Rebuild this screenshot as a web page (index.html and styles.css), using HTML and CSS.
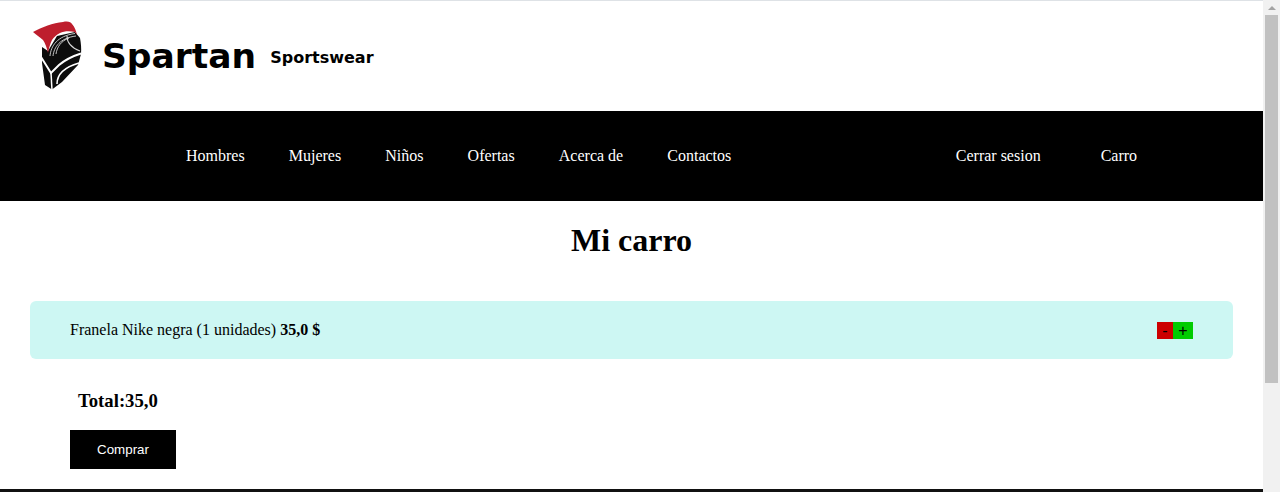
FILE: index.html
```html
<!DOCTYPE html>
<html lang="es">
<head>
    <meta charset="UTF-8">
    <meta name="viewport" content="width=device-width, initial-scale=1.0">
    <title>Mi carro</title>
    <link rel="stylesheet" href="styles.css">
</head>
<body>
    <div class="page">
        <!-- Logo and brand name -->
        <header class="brand">
            <svg class="logo" width="50" height="70" viewBox="0 0 50 70">
                <path fill="#0c0c0c" d="M15 30 L24 15 L42 11 L47 17 C48 22 48.500 28 48 33 L45 44 L29 61 L19 68.500 L12 64 L9 42 L9 26 Z"/>
                <path fill="#be1e2d" d="M0 11 C9 6 20 2 30 1 C35 0 38 1 39 3 C42 6 43 10 44 14 L42 11 C37 10 31 10 27 12 C23 14 21 16 19 19 C17 23 16 27 15 32 C14 27 12 22 10 19 C7 16 3 14 0 11 Z"/>
                <path fill="none" stroke="#d8d8d8" stroke-width="0.9" d="M17 35 C18 25 24 15 42 12.500 M20 35 C21 26 27 17 43 15 M23 33 C24 26 28 20 36 17"/>
                <path fill="none" stroke="#d8d8d8" stroke-width="1.100" d="M34 15 C34 22 39 27 47 30"/>
                <path fill="none" stroke="#fff" stroke-width="2" d="M8 36 L18 52 L26 44 C32 39 40 35 48 32.500"/>
                <path fill="none" stroke="#fff" stroke-width="1.500" d="M18 52 L19 69"/>
                <path fill="none" stroke="#fff" stroke-width="1.600" d="M24 63 C24 53 32 46 46 42"/>
            </svg>
            <span class="brand-name">Spartan</span>
            <span class="brand-tag">Sportswear</span>
        </header>

        <!-- Main navigation -->
        <nav class="navbar">
            <div class="nav-left">
                <a href="#">Hombres</a>
                <a href="#">Mujeres</a>
                <a href="#">Niños</a>
                <a href="#">Ofertas</a>
                <a href="#">Acerca de</a>
                <a href="#">Contactos</a>
            </div>
            <div class="nav-right">
                <a href="#">Cerrar sesion</a>
                <a href="#">Carro</a>
            </div>
        </nav>

        <main class="cart">
            <h1>Mi carro</h1>

            <div class="cart-item">
                <span>Franela Nike negra (1 unidades) <b>35,0 $</b></span>
                <div class="qty-buttons">
                    <button class="btn-minus">-</button>
                    <button class="btn-plus">+</button>
                </div>
            </div>

            <h3 class="total">Total:35,0</h3>
            <button class="buy">Comprar</button>
        </main>

        <footer class="footer"></footer>
    </div>

    <!-- Browser scrollbar -->
    <div class="scrollbar">
        <span class="arrow"></span>
        <span class="thumb"></span>
    </div>
</body>
</html>
```

FILE: styles.css
```css
html, body {
    height: 100%;
}

body {
    margin: 0;
    display: flex;
    height: 492px;
    overflow: hidden;
    background-color: #ffffff;
    color: #000;
    font-family: "Liberation Serif", serif;
    font-size: 16px;
}

.page {
    flex: 1;
    min-width: 0;
    display: flex;
    flex-direction: column;
    border-top: 1px solid #dee2e6;
}

.brand {
    height: 110px;
    padding-left: 33px;
    display: flex;
    align-items: center;
    font-family: "DejaVu Sans", sans-serif;
    font-weight: bold;
}

.logo {
    flex: none;
}

.brand-name {
    margin-left: 19px;
    font-size: 34.5px;
}

.brand-tag {
    margin-left: 14px;
    font-size: 16px;
    margin-top: 2px;
}

.navbar {
    height: 90px;
    flex: none;
    background-color: #000;
    display: flex;
    align-items: center;
    padding-left: 186px;
}

.navbar a {
    color: #fff;
    text-decoration: none;
}

.nav-left {
    display: flex;
    gap: 44.1px;
}

.nav-right {
    display: flex;
    gap: 60px;
    margin-left: 224.5px;
}

.cart {
    flex: 1;
    padding: 0 30px;
}

h1 {
    margin: 21px 0 42px;
    font-size: 32px;
    line-height: 37px;
    text-align: center;
}

.cart-item {
    height: 58px;
    padding: 0 40px;
    display: flex;
    align-items: center;
    justify-content: space-between;
    background-color: #cdf7f3;
    border-radius: 6px;
}

.qty-buttons {
    display: flex;
}

.qty-buttons button {
    height: 17px;
    padding: 0;
    border: none;
    font-family: "Liberation Sans", sans-serif;
    font-size: 16px;
    line-height: 17px;
    color: #000;
}

.btn-minus {
    width: 16px;
    background-color: #cc0000;
}

.btn-plus {
    width: 20px;
    background-color: #00cc00;
}

.total {
    margin: 31px 0 19px 48px;
    font-size: 18.72px;
    line-height: 21px;
}

.buy {
    display: block;
    width: 106px;
    height: 39px;
    margin-left: 40px;
    border: none;
    background-color: #000;
    color: #fff;
    font-family: "Liberation Sans", sans-serif;
    font-size: 13.33px;
}

.footer {
    height: 3px;
    flex: none;
    background-color: #111;
}

.scrollbar {
    flex: none;
    width: 17px;
    background-color: #f1f1f1;
    display: flex;
    flex-direction: column;
    align-items: center;
}

.arrow {
    margin: 6px 0 5px;
    border-left: 4px solid transparent;
    border-right: 4px solid transparent;
    border-bottom: 4px solid #a3a3a3;
}

.thumb {
    width: 13px;
    height: 368px;
    background-color: #c1c1c1;
}
```
